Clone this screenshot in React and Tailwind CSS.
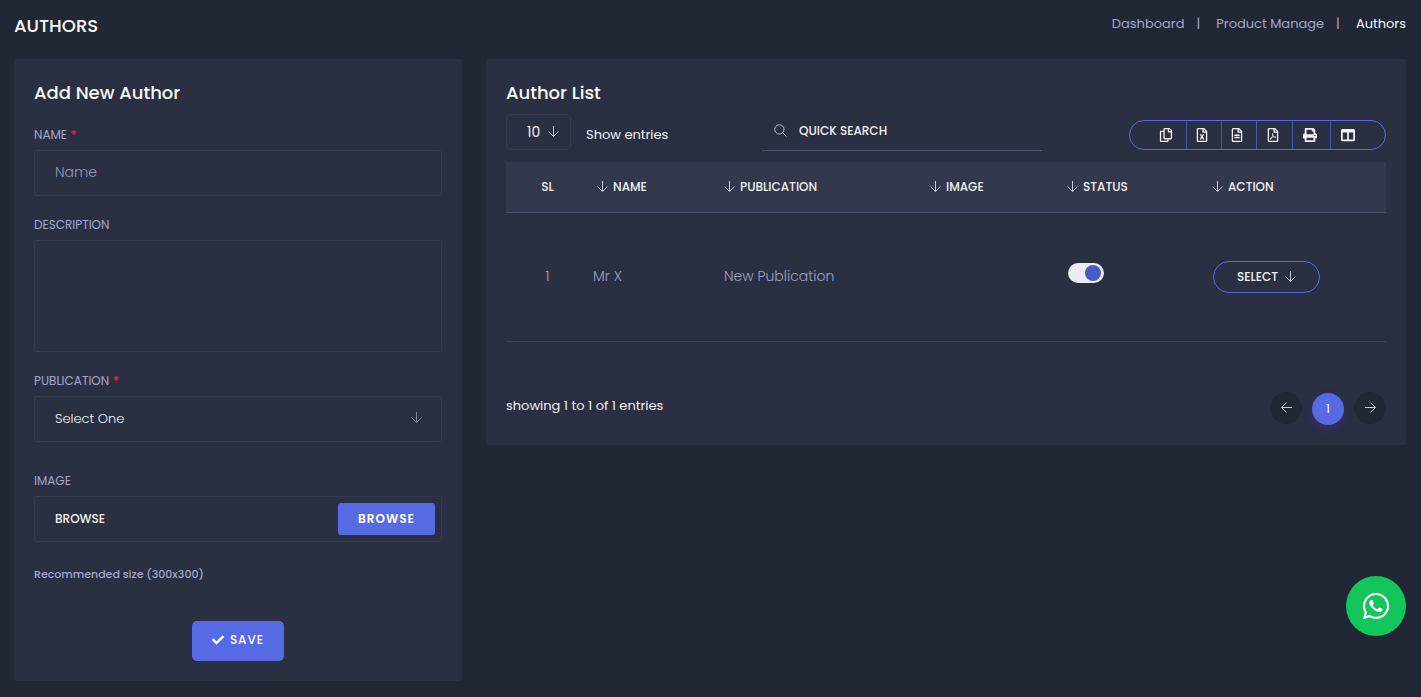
import React, { useRef, useState } from 'react'
import {
  FaRegCopy,
  FaRegFileExcel,
  FaRegFileAlt,
  FaRegFilePdf,
  FaPrint,
  FaColumns,
  FaCheck,
  FaWhatsapp,
} from 'react-icons/fa'

const EXPORTS = [
  { label: 'Copy',    icon: FaRegCopy,      cell: 'w-[57px] pl-4 border-r' },
  { label: 'Excel',   icon: FaRegFileExcel, cell: 'w-[35px] pr-1 border-r' },
  { label: 'CSV',     icon: FaRegFileAlt,   cell: 'w-[35px] pr-1 border-r' },
  { label: 'PDF',     icon: FaRegFilePdf,   cell: 'w-[36px] pr-1 border-r' },
  { label: 'Print',   icon: FaPrint,        cell: 'w-[38px] pr-1 border-r' },
  { label: 'Columns', icon: FaColumns,      cell: 'flex-1 pr-5' },
]

const COLUMNS = [
  { label: 'Name',        width: 'w-[131px]', pad: 'pl-2' },
  { label: 'Publication', width: 'w-[206px]', pad: 'pl-1' },
  { label: 'Image',       width: 'w-[137px]', pad: 'pl-1' },
  { label: 'Status',      width: 'w-[145px]', pad: 'pl-1' },
  { label: 'Action',      width: '',          pad: 'pl-1' },
]

const AUTHORS = [{ id: 1, name: 'Mr X', publication: 'New Publication', active: true }]

const LABEL = 'block text-[12px] leading-[18px] mb-[6px] uppercase text-[#a2a8cc]'
const FIELD = 'block w-full rounded-[3px] border border-[#353a50] bg-transparent px-5 outline-none'

function Arrow({ dir = 'down', className = '' }) {
  const paths = {
    down:  'M5.5 0v10.5M0.5 5.5l5 5l5-5',
    left:  'M11 5.5h-10.5M5.5 0.5l-5 5l5 5',
    right: 'M0 5.5h10.5M5.5 0.5l5 5l-5 5',
  }
  return (
    <svg
      viewBox="0 0 11 11"
      className={`size-[11px] shrink-0 overflow-visible ${className}`}
      fill="none"
      stroke="currentColor"
      aria-hidden="true"
    >
      <path d={paths[dir]} />
    </svg>
  )
}

function Required() {
  return <span className="font-bold text-[#e3174a]">*</span>
}

function AuthorForm() {
  const fileRef = useRef(null)

  return (
    <form className="bg-[#2b2f42] rounded-[3px] p-5" onSubmit={(e) => e.preventDefault()}>
      <h2 className="text-[18px] leading-[27px] font-medium text-[#f8f8f8] mb-5">Add New Author</h2>

      <label htmlFor="name" className={LABEL}>Name <Required /></label>
      <input id="name" placeholder="Name" className={`${FIELD} h-[46px] pb-[2px] text-[14px] font-light text-white placeholder:text-[#9298ba]`} />

      <label htmlFor="description" className={`${LABEL} mt-5`}>Description</label>
      <textarea id="description" className={`${FIELD} h-28 py-3 text-[14px] text-white resize-none`} />

      <label htmlFor="publication" className={`${LABEL} mt-5`}>Publication <Required /></label>
      <div className="relative">
        <select id="publication" className={`${FIELD} h-[46px] text-[13px] font-light text-[#f1f1f1] appearance-none`}>
          <option>Select One</option>
          <option>New Publication</option>
        </select>
        <Arrow className="absolute right-5 top-4 text-[#82869f] pointer-events-none" />
      </div>

      <label htmlFor="image" className={`${LABEL} mt-[30px]`}>Image</label>
      <div className="flex items-center h-[46px] rounded-[3px] border border-[#353a50] pl-5 pr-[6px]">
        <input id="image" readOnly placeholder="BROWSE" className="flex-1 min-w-0 bg-transparent text-[12px] font-medium text-[#f1f1f1] placeholder:text-[#f1f1f1] outline-none" />
        <input ref={fileRef} type="file" className="hidden" aria-label="Image file" />
        <button
          type="button"
          onClick={() => fileRef.current.click()}
          className="w-[97px] h-8 rounded-[3px] bg-[#566be3] text-[12px] font-semibold tracking-[1px] text-white"
        >
          BROWSE
        </button>
      </div>
      <p className="mt-6 text-[11px] leading-4 font-medium text-[#a2a8cc]">Recommended size (300x300)</p>

      <div className="mt-[39px] flex justify-center">
        <button type="submit" className="flex items-center justify-center gap-[6px] w-[92px] h-10 pb-[2px] rounded-[5px] bg-[#566be3] text-[12px] font-medium tracking-[1px] text-white">
          <FaCheck className="size-3" />
          SAVE
        </button>
      </div>
    </form>
  )
}

function Toolbar() {
  return (
    <div className="mt-[5px] flex justify-between items-end">
      <div className="flex items-center w-[169px]">
        <div className="relative">
          <select id="entries" className="block w-[65px] h-9 mb-px rounded-[5px] border border-[#353a50] bg-transparent pl-5 text-[14px] text-[#f1f1f1] appearance-none outline-none">
            <option>10</option>
            <option>25</option>
            <option>50</option>
          </select>
          <Arrow className="absolute right-3 top-3 text-[#c5c7d2] pointer-events-none" />
        </div>
        <label htmlFor="entries" className="pl-[15px] pt-1 text-[13px] leading-5 text-[#f1f1f1] whitespace-nowrap">Show entries</label>
      </div>

      <label className="flex items-center gap-3 w-[280px] h-10 pl-3 border-b border-[#4d536c]">
        <svg viewBox="0 0 14 14" className="size-[13px]" fill="none" stroke="#c5c7d2" aria-hidden="true">
          <circle cx="5.8" cy="5.8" r="5" />
          <path d="M9.4 9.4l4 4" />
        </svg>
        <input placeholder="QUICK SEARCH" aria-label="Quick search" className="flex-1 min-w-0 bg-transparent text-[12px] font-medium text-[#f1f1f1] placeholder:text-[#f1f1f1] outline-none" />
      </label>

      <div className="flex w-[257px] h-[30px] mb-px rounded-full border border-[#566be3] text-[#f1f1f1]">
        {EXPORTS.map(({ label, icon: Icon, cell }) => (
          <button key={label} aria-label={label} className={`flex items-center justify-center border-[#566be3]/70 ${cell}`}>
            <Icon className="size-[14px]" />
          </button>
        ))}
      </div>
    </div>
  )
}

function AuthorRow({ author }) {
  const [active, setActive] = useState(author.active)

  return (
    <tr className="h-[129px] border-b border-[#3a3f56] text-[14px] font-light text-[#9ca2c6]">
      <td className="text-center">{author.id}</td>
      <td className="pl-1">{author.name}</td>
      <td className="pl-1">{author.publication}</td>
      <td></td>
      <td className="pl-[5px] pb-2">
        <input
          type="checkbox"
          checked={active}
          onChange={(e) => setActive(e.target.checked)}
          aria-label="Status"
          className="flex items-center w-9 h-5 px-[3px] rounded-full bg-[#ecedf4] appearance-none checked:justify-end before:block before:size-4 before:rounded-full before:bg-[#475bc4]"
        />
      </td>
      <td className="pl-[5px]">
        <button className="flex items-center justify-center gap-[7px] w-[107px] h-8 rounded-full border border-[#566be3] text-[12px] font-medium text-[#f1f1f1]">
          SELECT
          <Arrow className="text-[#c5c7d2]" />
        </button>
      </td>
    </tr>
  )
}

function AuthorList() {
  return (
    <section className="col-span-2 bg-[#2b2f42] rounded-[3px] p-5">
      <h2 className="text-[18px] leading-[27px] font-medium text-[#f8f8f8]">Author List</h2>
      <Toolbar />

      <table className="mt-[11px] w-full table-fixed border-collapse text-left">
        <thead>
          <tr className="h-[50px] bg-[#33384c] border-b border-[#4d536c] text-[12px] font-medium uppercase text-[#f1f1f1]">
            <th className="w-[83px] text-center font-medium">SL</th>
            {COLUMNS.map((c) => (
              <th key={c.label} className={`${c.width} ${c.pad} font-medium`}>
                <span className="flex items-center gap-[5px]">
                  <Arrow className="text-[#c5c7d2]" />
                  {c.label}
                </span>
              </th>
            ))}
          </tr>
        </thead>
        <tbody>
          {AUTHORS.map((a) => <AuthorRow key={a.id} author={a} />)}
        </tbody>
      </table>

      <div className="mt-[50px] flex items-start justify-between h-[33px]">
        <p className="pt-1 text-[13px] leading-5 text-[#f1f1f1]">showing 1 to 1 of 1 entries</p>
        <nav aria-label="Pagination" className="flex gap-[10px] text-[12px] text-white">
          <button aria-label="Previous" className="flex items-center justify-center size-8 rounded-full bg-[#222735]">
            <Arrow dir="left" className="text-[#c5c7d2]" />
          </button>
          <button className="size-8 mt-px rounded-full bg-[#566be3] shadow-[0_5px_10px_rgba(65,40,150,0.4)]">1</button>
          <button aria-label="Next" className="flex items-center justify-center size-8 rounded-full bg-[#222735]">
            <Arrow dir="right" className="text-[#c5c7d2]" />
          </button>
        </nav>
      </div>
    </section>
  )
}

export default function App() {
  return (
    <div className="min-h-screen bg-[#222735] pl-[14px] pr-[15px] pb-4 font-['Poppins','Inter',sans-serif]">
      <header className="flex items-start justify-between h-[59px]">
        <h1 className="pt-3 text-[18px] leading-[27px] font-medium text-[#f8f8f8]">AUTHORS</h1>
        <nav aria-label="Breadcrumb" className="flex gap-3 pt-[14px] text-[13px] leading-5 text-[#a2a8cc]">
          <a href="#dashboard">Dashboard</a>
          <span className="pr-1">|</span>
          <a href="#products">Product Manage</a>
          <span className="pr-1">|</span>
          <a href="#authors" className="text-[#f8f8f8]">Authors</a>
        </nav>
      </header>

      <main className="grid grid-cols-3 gap-6 items-start">
        <AuthorForm />
        <AuthorList />
      </main>

      <a
        href="#whatsapp"
        aria-label="WhatsApp"
        className="fixed right-[15px] bottom-[61px] flex items-center justify-center size-[60px] rounded-full bg-[#12c65b] text-white"
      >
        <FaWhatsapp className="size-[30px]" />
      </a>
    </div>
  )
}
